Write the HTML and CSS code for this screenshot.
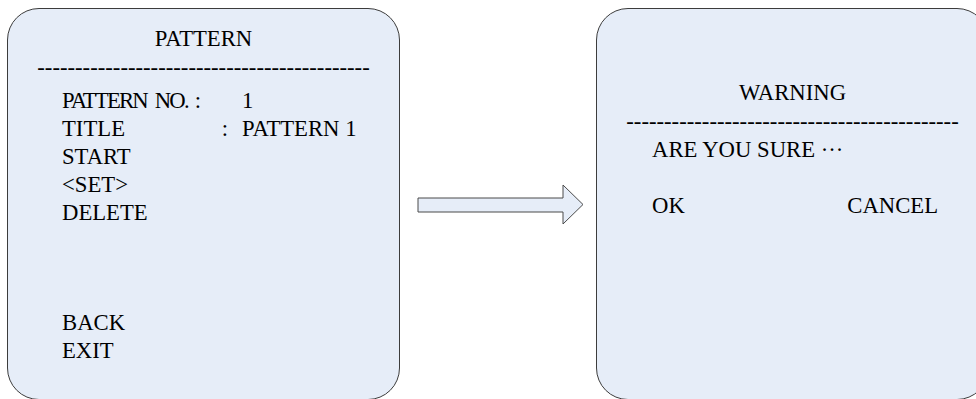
FILE: index.html
```html
<!DOCTYPE html>
<html lang="en">
<head>
  <meta charset="UTF-8" />
  <meta name="viewport" content="width=device-width, initial-scale=1.0"/>
  <title>Pattern menu</title>
  <link rel="stylesheet" href="styles.css">
</head>
<body>
  <div class="screens">

    <div class="panel panel-menu">
      <div class="title">PATTERN</div>
      <div class="rule">--------------------------------------------</div>

      <div class="field field-first">
        <span class="key"><span class="tight">PATTERN NO.</span><span class="colon-near">:</span></span>
        <span class="val">1</span>
      </div>
      <div class="field">
        <span class="key key-wide">TITLE<span class="colon">:</span></span>
        <span class="val">PATTERN 1</span>
      </div>
      <div class="item">START</div>
      <div class="item">&lt;SET&gt;</div>
      <div class="item">DELETE</div>

      <div class="item item-gap">BACK</div>
      <div class="item">EXIT</div>
    </div>

    <svg class="arrow" width="168" height="42" viewBox="0 0 168 42">
      <polygon points="1,14 146,14 146,1 166,20.5 146,40 146,28 1,28" />
    </svg>

    <div class="panel panel-warn">
      <div class="title">WARNING</div>
      <div class="rule rule-warn">--------------------------------------------</div>
      <div class="item">ARE YOU SURE &middot;&middot;&middot;</div>
      <div class="choices">
        <span>OK</span>
        <span>CANCEL</span>
      </div>
    </div>

  </div>
</body>
</html>
```

FILE: styles.css
```css
html, body {
  margin: 0;
  padding: 0;
  background-color: #ffffff;
  overflow: hidden;
}

body {
  font-family: "Liberation Serif", "Times New Roman", serif;
  font-size: 22.7px;
  line-height: 28px;
  color: #000000;
}

.screens {
  display: flex;
  align-items: flex-start;
  padding: 8px 0 0 7px;
  width: 1100px;
}

.panel {
  flex-shrink: 0;
  box-sizing: border-box;
  width: 393px;
  height: 392px;
  background-color: #e6edf8;
  border: 1.5px solid #3c3c3c;
  border-radius: 32px;
}

.panel-menu {
  padding: 16px 0 0 54px;
}

.panel-warn {
  margin-left: 11px;
  padding: 70px 0 0 55px;
}

.title,
.rule {
  text-align: center;
  white-space: nowrap;
}

.panel-menu .title,
.panel-menu .rule {
  margin-left: -54px;
}

.panel-warn .title,
.panel-warn .rule {
  margin-left: -55px;
}

.rule {
  margin-top: 1px;
}

.rule-warn {
  margin-top: 1px;
}

.field {
  display: flex;
}

.field-first {
  margin-top: 5px;
}

.key {
  display: flex;
  width: 180px;
  flex-shrink: 0;
}

.key-wide {
  justify-content: space-between;
  padding-right: 14px;
  box-sizing: border-box;
}

.tight {
  letter-spacing: -1.8px;
  word-spacing: 4px;
}

.colon-near {
  margin-left: 7px;
}

.item-gap {
  margin-top: 82px;
}

.choices {
  display: flex;
  justify-content: space-between;
  width: 286px;
  margin-top: 28px;
}

.arrow {
  flex-shrink: 0;
  margin: 176px 0 0 17px;
}

.arrow polygon {
  fill: #e6edf8;
  stroke: #4a4a4a;
  stroke-width: 1;
}
```
